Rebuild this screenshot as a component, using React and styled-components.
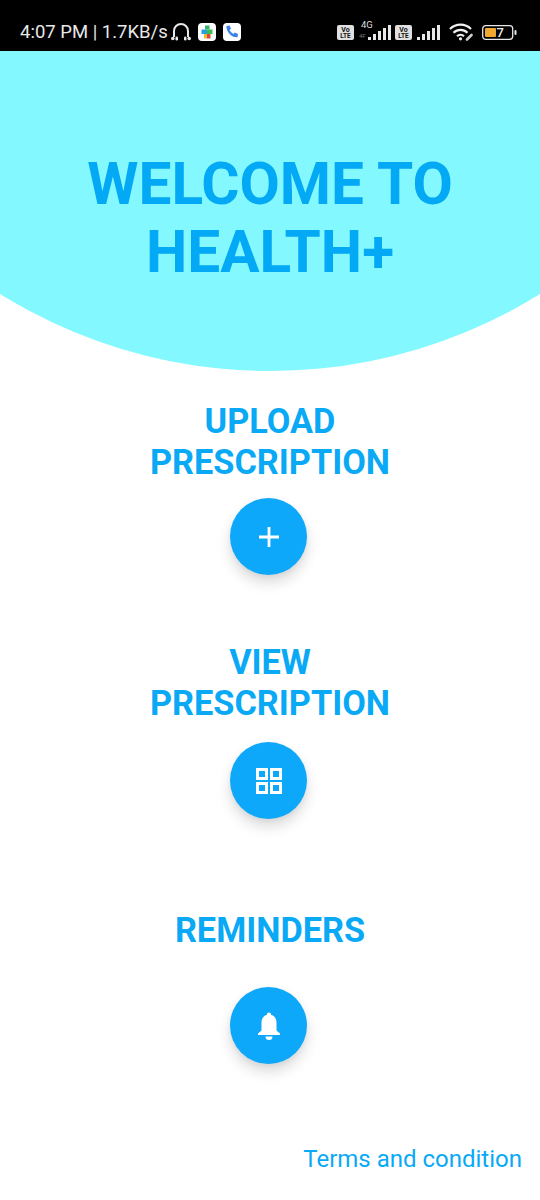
import styled, { createGlobalStyle } from "styled-components";

const GlobalStyle = createGlobalStyle`
  html, body {
    margin: 0;
    padding: 0;
    background: #fff;
    font-family: Roboto, "Liberation Sans", sans-serif;
  }
`;

const Page = styled.div`
  width: 540px;
  height: 1200px;
  display: flex;
  flex-direction: column;
  overflow: hidden;
  background: #fff;
`;

const StatusBar = styled.div`
  height: 51px;
  flex: none;
  box-sizing: border-box;
  padding: 13px 23px 0 20px;
  background: #000;
  display: flex;
  align-items: center;
  justify-content: space-between;
`;

const StatusGroup = styled.div`
  display: flex;
  align-items: center;
`;

const StatusText = styled.span`
  color: #e8e8e8;
  font-size: 18.5px;
  white-space: nowrap;
`;

const Hero = styled.div`
  height: 320px;
  flex: none;
  box-sizing: border-box;
  padding-top: 99px;
  background: #84f8ff;
  clip-path: circle(512px at 270px -192px);
`;

const HeroTitle = styled.h1`
  margin: 0;
  color: #03a9f4;
  font-size: 58.5px;
  font-weight: 700;
  line-height: 68px;
  text-align: center;
`;

const Actions = styled.div`
  display: flex;
  flex-direction: column;
  align-items: center;
  padding-top: 30px;
`;

const Action = styled.div`
  display: flex;
  flex-direction: column;
  align-items: center;
  height: ${(p) => p.$height}px;
`;

const ActionTitle = styled.div`
  width: 300px;
  color: #0aa9f5;
  font-size: 34.3px;
  font-weight: 700;
  line-height: 41px;
  text-align: center;
`;

const Fab = styled.button`
  width: 77px;
  height: 77px;
  margin-top: ${(p) => p.$top}px;
  margin-right: 3px;
  padding: 0;
  border: none;
  border-radius: 50%;
  background: #0ea8fb;
  box-shadow: 0 8px 14px rgba(0, 0, 0, 0.14), 0 2px 5px rgba(0, 0, 0, 0.05);
  display: flex;
  align-items: center;
  justify-content: center;
`;

const Footer = styled.div`
  display: flex;
  justify-content: flex-end;
  padding: 0 18px 0 0;
  margin-top: auto;
  margin-bottom: 25px;
`;

const TermsLink = styled.a`
  color: #0aa9f5;
  font-size: 24px;
  line-height: 32px;
`;

function Headphones() {
  return (
    <svg width="20" height="20" viewBox="0 0 20 20" style={{ marginLeft: 3 }}>
      <path d="M3 15V9a7 7 0 0 1 14 0V15" fill="none" stroke="#e8e8e8" strokeWidth="2" />
      <circle cx="1.800" cy="16.500" r="1.800" fill="#e8e8e8" />
      <rect x="4.500" y="14.500" width="2.500" height="4" rx="1.200" fill="#e8e8e8" />
      <rect x="13" y="14.500" width="2.500" height="4" rx="1.200" fill="#e8e8e8" />
      <circle cx="18.200" cy="16.500" r="1.800" fill="#e8e8e8" />
    </svg>
  );
}

function PlayGames() {
  return (
    <svg width="18" height="18" viewBox="0 0 18 18" style={{ marginLeft: 7 }}>
      <rect width="18" height="18" rx="4" fill="#fff" />
      <path d="M7 2.500h4.500v4H7z" fill="#2fb36a" />
      <path d="M3.500 6.500H9v4.500H3.500z" fill="#2b9fd8" />
      <path d="M9 6.500h5.500v4.500H9z" fill="#3fbf4f" />
      <path d="M6 11h3v4.500H6z" fill="#f2b632" />
      <path d="M9 11h3.500v4.500H9z" fill="#e0473c" />
    </svg>
  );
}

function PhoneApp() {
  return (
    <svg width="18" height="18" viewBox="0 0 18 18" style={{ marginLeft: 7 }}>
      <rect width="18" height="18" rx="4" fill="#fff" />
      <path d="M3.500 3l3-.5 1.500 3.300-1.500 1.200a8 8 0 0 0 4 4l1.300-1.400 3.200 1.500-.5 3.200C9 15 3 9 3.500 3z" fill="#3b82e8" />
    </svg>
  );
}

function Volte({ left }) {
  return (
    <svg width="17" height="15" viewBox="0 0 17 15" style={{ marginLeft: left }}>
      <rect width="17" height="15" rx="2" fill="#e0e0e0" />
      <text x="8.500" y="6.500" fontSize="7" fontWeight="700" textAnchor="middle" fill="#111" fontFamily="Roboto, sans-serif">Vo</text>
      <text x="8.500" y="13.300" fontSize="6.500" fontWeight="700" textAnchor="middle" fill="#111" fontFamily="Roboto, sans-serif">LTE</text>
    </svg>
  );
}

function Bars() {
  return (
    <>
      <rect x="0" y="12" width="3" height="3" fill="#e8e8e8" />
      <rect x="5" y="9" width="3" height="6" fill="#e8e8e8" />
      <rect x="10" y="6" width="3" height="9" fill="#e8e8e8" />
      <rect x="15" y="3" width="3" height="12" fill="#e8e8e8" />
      <rect x="20" y="0" width="3" height="15" fill="#e8e8e8" />
    </>
  );
}

function Signal({ left }) {
  return (
    <svg width="24" height="15" viewBox="0 0 24 15" style={{ marginLeft: left }}>
      <Bars />
    </svg>
  );
}

function Signal4G({ left }) {
  return (
    <svg width="32" height="20" viewBox="0 0 32 20" style={{ marginLeft: left, marginTop: -4 }}>
      <text x="2" y="8" fontSize="9.500" fill="#ddd" fontFamily="Roboto, sans-serif">4G</text>
      <text x="0" y="18" fontSize="6" fill="#777" fontFamily="Roboto, sans-serif">4F</text>
      <g transform="translate(9 5)">
        <Bars />
      </g>
    </svg>
  );
}

function Wifi() {
  return (
    <svg width="25" height="18" viewBox="0 0 25 18" style={{ marginLeft: 8 }}>
      <path d="M1 6a15 15 0 0 1 21 0M4.500 9.800a10 10 0 0 1 14 0M8 13.300a5 5 0 0 1 7 0" fill="none" stroke="#f0f0f0" strokeWidth="2.200" />
      <circle cx="11.500" cy="15.800" r="1.600" fill="#f0f0f0" />
      <path d="M18 16.500l4.500-4.500" stroke="#ccc" strokeWidth="2.600" strokeLinecap="round" />
    </svg>
  );
}

function Battery() {
  return (
    <svg width="35" height="15" viewBox="0 0 35 15" style={{ marginLeft: 8 }}>
      <rect x="0.700" y="0.700" width="30" height="13.600" rx="3" fill="none" stroke="#e8e8e8" strokeWidth="1.300" />
      <rect x="3" y="3" width="11" height="9" rx="1" fill="#f0a830" />
      <text x="14.500" y="12" fontSize="13" fontWeight="500" fill="#eee" fontFamily="Roboto, sans-serif">7</text>
      <rect x="32.500" y="5" width="2" height="5" rx="1" fill="#e8e8e8" />
    </svg>
  );
}

function PlusIcon() {
  return (
    <svg width="20" height="20" viewBox="0 0 20 20">
      <path d="M10 0v20M0 10h20" stroke="#fff" strokeWidth="2.800" fill="none" />
    </svg>
  );
}

function GridIcon() {
  return (
    <svg width="26" height="26" viewBox="0 0 26 26" fill="none" stroke="#fff" strokeWidth="3">
      <rect x="1.500" y="1.500" width="9" height="9" />
      <rect x="15.500" y="1.500" width="9" height="9" />
      <rect x="1.500" y="15.500" width="9" height="9" />
      <rect x="15.500" y="15.500" width="9" height="9" />
    </svg>
  );
}

function BellIcon() {
  return (
    <svg width="24" height="28" viewBox="0 0 24 28" fill="#fff">
      <path d="M12 0.500a2 2 0 0 1 2 2.300c3.700 1 5.500 4 5.500 7.700v8l3.500 3v1.500H1V21.500l3.500-3v-8c0-3.700 1.800-6.700 5.500-7.700A2 2 0 0 1 12 .5z" />
      <path d="M8.500 24.500h7a3.500 3.500 0 0 1-7 0z" />
    </svg>
  );
}

export default function App() {
  return (
    <Page>
      <GlobalStyle />
      <StatusBar>
        <StatusGroup>
          <StatusText>4:07 PM | 1.7KB/s</StatusText>
          <Headphones />
          <PlayGames />
          <PhoneApp />
        </StatusGroup>
        <StatusGroup>
          <Volte left={0} />
          <Signal4G left={5} />
          <Volte left={4} />
          <Signal left={5} />
          <Wifi />
          <Battery />
        </StatusGroup>
      </StatusBar>
      <Hero>
        <HeroTitle>
          WELCOME TO
          <br />
          HEALTH+
        </HeroTitle>
      </Hero>
      <Actions>
        <Action $height={241}>
          <ActionTitle>
            UPLOAD
            <br />
            PRESCRIPTION
          </ActionTitle>
          <Fab $top={15} aria-label="Upload prescription">
            <PlusIcon />
          </Fab>
        </Action>
        <Action $height={268}>
          <ActionTitle>
            VIEW
            <br />
            PRESCRIPTION
          </ActionTitle>
          <Fab $top={18} aria-label="View prescription">
            <GridIcon />
          </Fab>
        </Action>
        <Action $height={170}>
          <ActionTitle>REMINDERS</ActionTitle>
          <Fab $top={36} aria-label="Reminders">
            <BellIcon />
          </Fab>
        </Action>
      </Actions>
      <Footer>
        <TermsLink>Terms and condition</TermsLink>
      </Footer>
    </Page>
  );
}
